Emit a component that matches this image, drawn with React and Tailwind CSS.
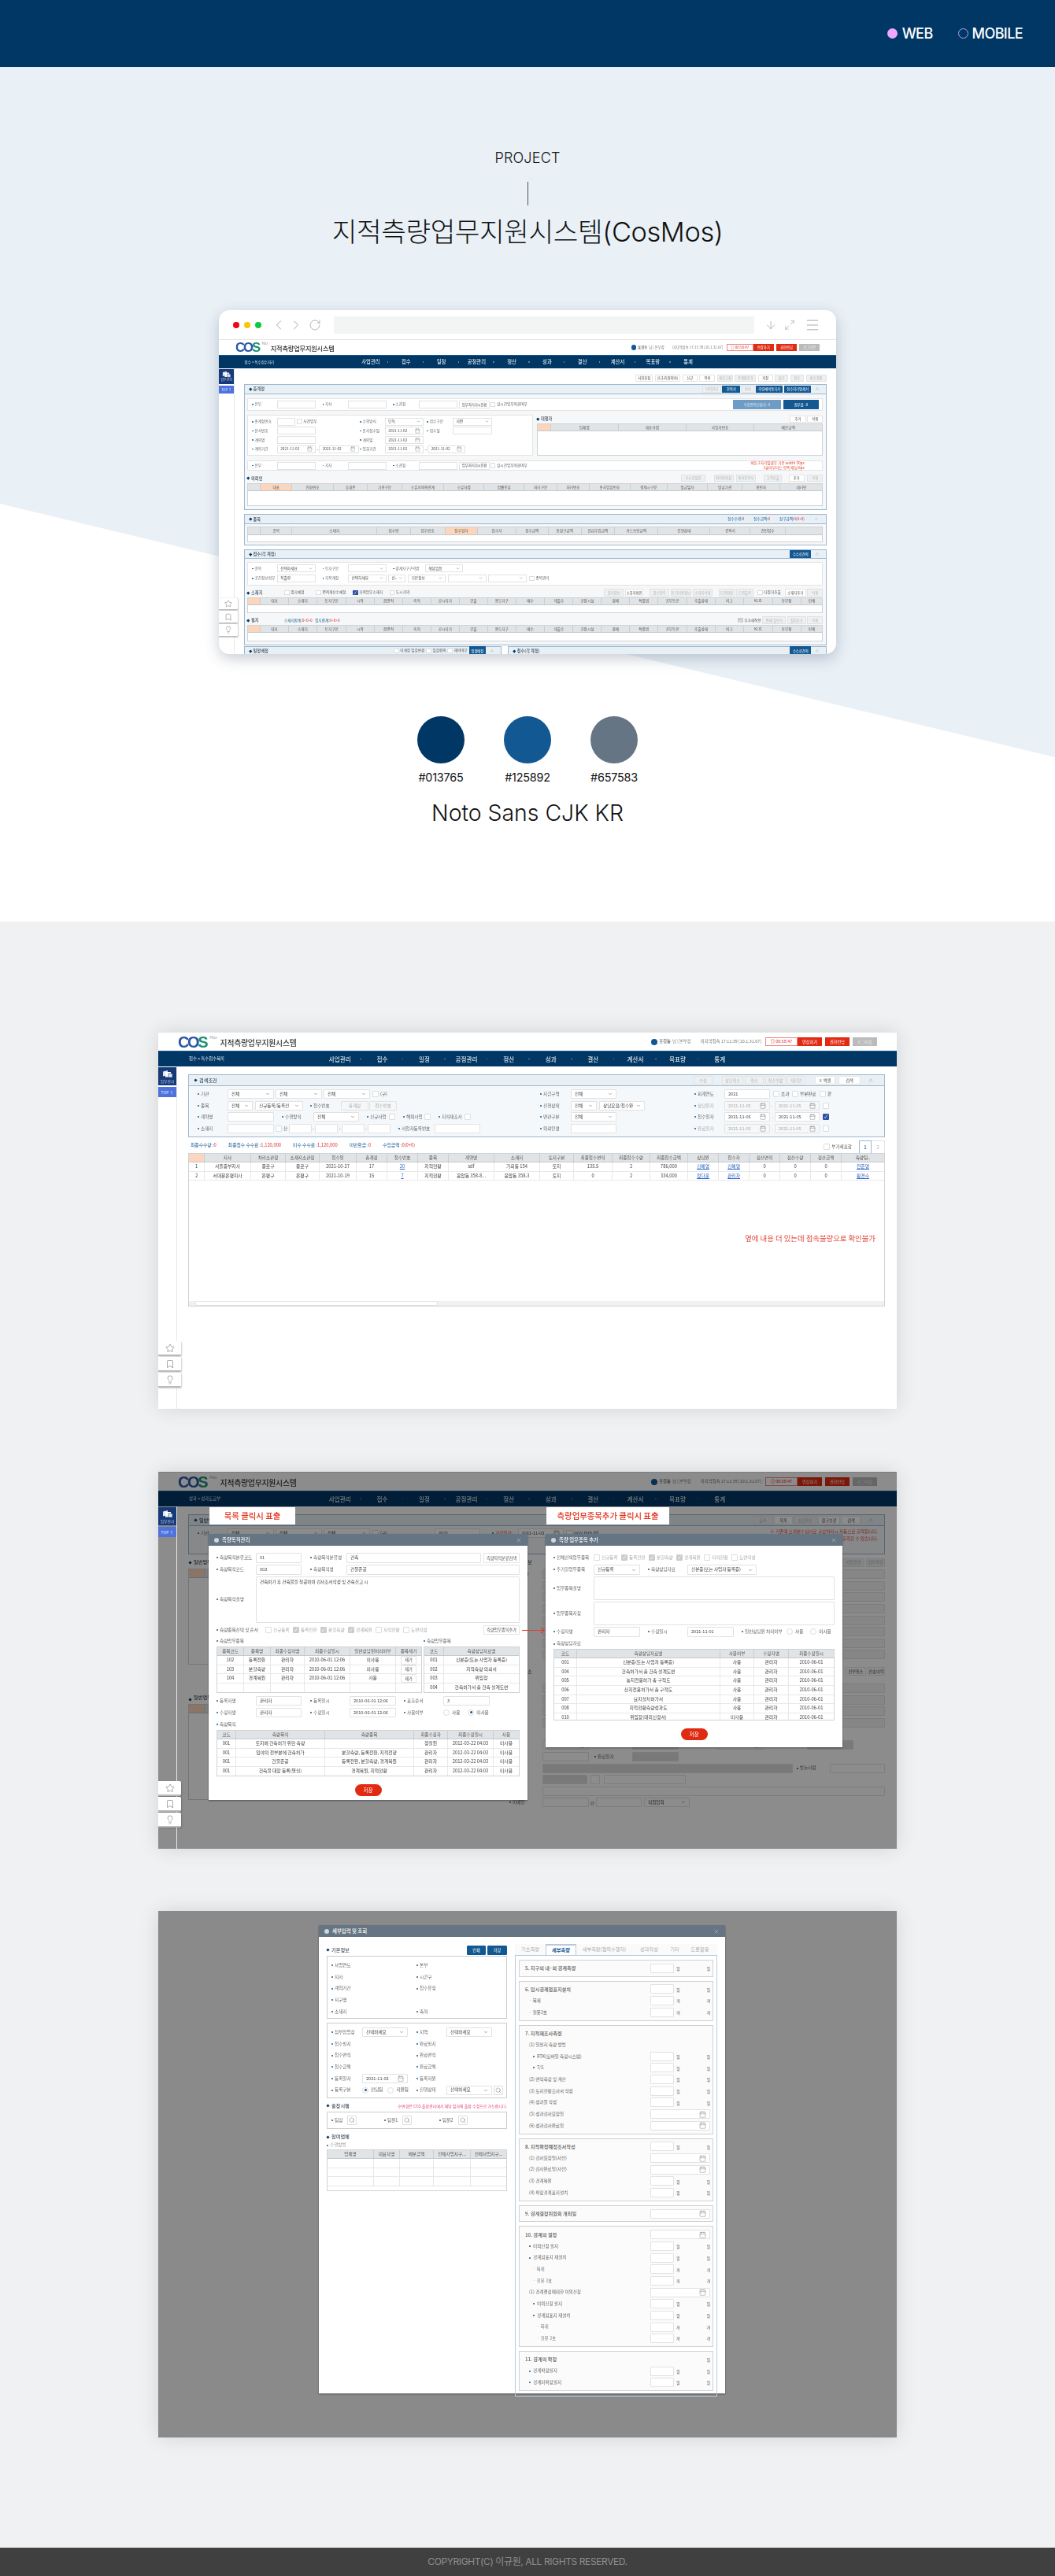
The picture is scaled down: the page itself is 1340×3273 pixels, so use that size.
import React from "react";
import clsx from "clsx";
import {
  ArrowDown,
  Bookmark,
  Calendar,
  ChevronDown,
  ChevronLeft,
  ChevronRight,
  Lightbulb,
  Maximize2,
  Menu,
  RotateCw,
  Search,
  Star,
  X,
} from "lucide-react";

/* ---------- small form bits used by every screen ---------- */

const Lb = ({ children, className, off }) => (
  <span
    className={clsx(
      "flex items-center text-[5.6px] whitespace-nowrap shrink-0",
      off ? "text-[#aaa]" : "text-[#666]",
      className
    )}
  >
    <span className="w-[2px] h-[2px] rounded-full bg-[#125892] mr-[2px] shrink-0"></span>
    {children}
  </span>
);

const Inp = ({ children, className, off }) => (
  <div
    className={clsx(
      "h-[12px] border border-[#e2e2e2] rounded-[1px] px-[4px] flex items-center justify-between text-[5.6px] whitespace-nowrap shrink-0 overflow-hidden",
      off ? "bg-[#f6f7f8] text-[#aaa]" : "bg-white text-[#444]",
      className
    )}
  >
    {children}
  </div>
);

const Sel = ({ children, className, off }) => (
  <Inp className={className} off={off}>
    <span>{children}</span>
    <ChevronDown size={6} strokeWidth={2} className="text-[#555] shrink-0" />
  </Inp>
);

const Dt = ({ children, className, off }) => (
  <Inp className={className} off={off}>
    <span>{children}</span>
    <Calendar size={8} strokeWidth={1.2} className="text-[#666] shrink-0" />
  </Inp>
);

const Chk = ({ children, on, blue, off, className }) => (
  <span className={clsx("flex items-center gap-[2px] text-[5.6px] whitespace-nowrap shrink-0", off ? "text-[#aaa]" : "text-[#555]", className)}>
    <span
      className={clsx(
        "w-[8px] h-[8px] border rounded-[1px] flex items-center justify-center text-[6px] leading-none",
        blue ? "bg-[#2f4fa0] border-[#2f4fa0] text-white" : on ? "bg-[#ccc] border-[#ccc] text-white" : "bg-white border-[#ddd]"
      )}
    >
      {blue || on ? "✓" : ""}
    </span>
    {children}
  </span>
);

const Radio = ({ children, on }) => (
  <span className="flex items-center gap-[3px] text-[5.6px] text-[#555] whitespace-nowrap shrink-0">
    <span className="w-[8px] h-[8px] rounded-full border border-[#ddd] bg-white flex items-center justify-center">
      {on && <span className="w-[3px] h-[3px] rounded-full bg-[#125892]"></span>}
    </span>
    {children}
  </span>
);

const Btn = ({ children, className, kind = "white" }) => (
  <span
    className={clsx(
      "h-[11px] px-[2px] flex items-center justify-center text-[5.2px] whitespace-nowrap shrink-0 border rounded-[1px]",
      kind === "white" && "bg-white border-[#e4e4e4] text-[#444]",
      kind === "off" && "bg-[#eef0f1] border-[#dfe2e4] text-[#b5b5b5]",
      kind === "blue" && "bg-[#125892] border-[#125892] text-white",
      kind === "soft" && "bg-[#6f9cc4] border-[#6f9cc4] text-[#dce8f2]",
      kind === "red" && "bg-[#e02a12] border-[#e02a12] text-white",
      className
    )}
  >
    {children}
  </span>
);

const Diamond = () => <span className="w-[3px] h-[3px] rotate-45 bg-[#013765] mr-[3px] shrink-0"></span>;

const Head = ({ children, className }) => (
  <div className={clsx("flex items-center text-[6.2px] font-medium text-[#3d4b58] whitespace-nowrap shrink-0", className)}>
    <Diamond />
    {children}
  </div>
);

const Panel = ({ title, right, className, children }) => (
  <div className={clsx("border border-[#9db8d0] flex flex-col", className)}>
    <div className="h-[14px] bg-[#e8f0f6] border-b border-[#9db8d0] flex items-center justify-between pl-[7px] pr-[6px] shrink-0">
      <Head>{title}</Head>
      <div className="flex items-center gap-[2px]">{right}</div>
    </div>
    {children}
  </div>
);

const Grid = ({ cols, head, rows = [], hl, hlFirst, className, center = true }) => (
  <div className={clsx("border border-[#cfd3d6] bg-white overflow-hidden", className)}>
    <div className={clsx("grid h-[11px] bg-[#e1e4e6] border-b border-[#c4c9cd]", cols)}>
      {head.map((h, i) => (
        <div
          key={i}
          className={clsx(
            "flex items-center justify-center border-r border-[#c9ced2] text-[5.6px] text-[#555] whitespace-nowrap overflow-hidden last:border-r-0",
            (i === hl || (hlFirst && i === 0)) && "bg-[#fbd5bc]"
          )}
        >
          {h}
        </div>
      ))}
    </div>
    {rows.map((r, i) => (
      <div key={i} className={clsx("grid h-[11.7px] border-b border-[#e8e8e8]", cols)}>
        {r.map((c, j) => (
          <div
            key={j}
            className={clsx(
              "flex items-center border-r border-[#e8e8e8] px-[1px] text-[5.8px] text-[#444] whitespace-nowrap overflow-hidden last:border-r-0",
              center ? "justify-center" : "justify-start"
            )}
          >
            {c}
          </div>
        ))}
      </div>
    ))}
  </div>
);

/* ---------- shared shell of the application ---------- */

const Logo = () => (
  <div className="flex items-start leading-none">
    <span className="font-['Liberation_Sans',sans-serif] font-bold text-[20px] tracking-[-2.4px] leading-[18px] text-[#2a56a8]">
      CO<span className="text-[#1d9170]">S</span>
    </span>
    <span className="ml-[4px] text-[5px] text-[#999] leading-none">Mos</span>
    <span className="ml-[4px] mt-[4px] text-[9.8px] font-medium text-[#333] tracking-[-0.2px] leading-[12px]">지적측량업무지원시스템</span>
  </div>
);

const AppHeader = () => (
  <div className="h-[24px] bg-white border-t border-[#e4e4e4] flex items-center justify-between pl-[25px] pr-[25px] shrink-0">
    <Logo />
    <div className="flex items-center text-[5.4px] text-[#777]">
      <span className="w-[8px] h-[8px] rounded-full bg-[#125892] mr-[2px]"></span>
      <span className="text-[#333]">홍길동</span>
      <span className="ml-[2px]">님 | 본부장</span>
      <span className="ml-[12px]">이지막접속 17:11:39 [10.1.31.67]</span>
      <span className="ml-[5px] h-[11px] w-[41px] border border-[#e88] text-[#d33] flex items-center justify-center bg-white">◎ 00:58:47</span>
      <Btn kind="red" className="w-[31px] rounded-none">연장하기</Btn>
      <Btn kind="red" className="w-[31px] ml-[4px] rounded-none">권한반납</Btn>
      <Btn className="w-[31px] ml-[4px] rounded-none !bg-[#bbb] !border-[#bbb] !text-[#eee]">로그아웃</Btn>
    </div>
  </div>
);

const NAV = ["사업관리", "접수", "일정", "공정관리", "정산", "성과", "결산", "계산서", "목표량", "통계"];

const AppNav = ({ crumb }) => (
  <div className="h-[20px] bg-[#013765] border-t border-[#125892] flex items-center shrink-0 text-white">
    <div className="w-[204px] pl-[39px] text-[5.4px] text-[#dfe8f0] whitespace-nowrap">{crumb}</div>
    <div className="flex">
      {NAV.map((n, i) => (
        <div key={n} className="w-[53.6px] relative flex items-center justify-center text-[7.6px] whitespace-nowrap">
          {n}
          {i < NAV.length - 1 && <span className="absolute right-0 w-[1.5px] h-[1.5px] rounded-full bg-[#6f9cc4]"></span>}
        </div>
      ))}
    </div>
  </div>
);

const QuickBtn = ({ icon: Icon }) => (
  <div className="w-[29px] h-[19px] bg-white border-b-2 border-[#bbb] rounded-r-[2px] shadow-[1px_1px_2px_rgba(0,0,0,0.2)] flex items-center justify-center">
    <Icon size={12} strokeWidth={1} className="text-[#555]" />
  </div>
);

const Sidebar = () => (
  <div className="w-[24px] border-r border-[#e8e8e8] flex flex-col justify-between pt-[1px] pb-[27px] shrink-0 relative z-10">
    <div className="flex flex-col gap-[2px]">
      <div className="h-[23px] bg-[#163a78] flex flex-col items-center justify-center text-white">
        <svg width="14" height="11" viewBox="0 0 14 11">
          <path d="M1 2.5 7 1v6L1 8.5Z" fill="#dfe6f0" />
          <path d="M4 3h7v6.5H4Z" fill="#fff" />
          <path d="M8 5h5v5H8Z" fill="#dfe6f0" stroke="#163a78" strokeWidth="0.6" />
        </svg>
        <span className="text-[4.8px] text-[#b9c9f0] leading-[7px] whitespace-nowrap">업무관리</span>
      </div>
      <div className="h-[13px] bg-[#4f72dd] text-[#e6ecff] text-[5px] flex items-center justify-center">TOP ↑</div>
    </div>
    <div className="flex flex-col gap-[1px]">
      <QuickBtn icon={Star} />
      <QuickBtn icon={Bookmark} />
      <QuickBtn icon={Lightbulb} />
    </div>
  </div>
);

const Shell = ({ crumb, children, overlay, className }) => (
  <div className={clsx("w-[938px] h-[479px] bg-white overflow-hidden relative flex flex-col font-['Noto_Sans_CJK_KR',sans-serif] blur-[0.3px]", className)}>
    <AppHeader />
    <AppNav crumb={crumb} />
    <div className="flex flex-1 min-h-0">
      <Sidebar />
      <div className="flex-1 min-w-0 ml-[14px] mr-[15px]">{children}</div>
    </div>
    {overlay}
  </div>
);

/* ---------- the main form shown inside the browser mock ---------- */

const AddrRow = () => (
  <>
    <Lb className="w-[38px]">본부</Lb>
    <Inp className="w-[59px]" />
    <Lb className="w-[39px] ml-[10px]">지사</Lb>
    <Inp className="w-[59px]" />
    <Lb className="w-[40px] ml-[9px]">소관청</Lb>
    <Inp className="w-[58px]" />
    <Btn className="w-[46px] h-[12px] ml-[3px]">업무처리지시전환</Btn>
    <Chk className="ml-[1px]">실시간업무여권여부</Chk>
  </>
);

const SITE_HEAD = ["", "대표", "소재지", "토지구분", "시작", "읍면적", "축척", "공시지가", "건물", "용도지구", "매수", "제출수", "공장시설", "경매", "특별법", "공부등본", "추출상태", "비고", "KLIS", "동부합", "인쇄"];
const SITE_COLS = "grid-cols-[19.5px_42px_44px_44px_43px_43px_43px_43px_43px_43px_44px_43px_43px_43px_43px_44px_43px_43px_44px_43px_1fr]";

const ReceiptForm = () => (
  <div className="relative">
    <div className="flex justify-end gap-[3px] mt-[10px] h-[11px]">
      <Btn className="w-[26px]">사전요청</Btn>
      <Btn className="w-[39px]">신규(측량의뢰)</Btn>
      <Btn className="w-[23px]">신규</Btn>
      <Btn className="w-[24px]">목록</Btn>
      <Btn kind="off" className="w-[24px]">새로고침</Btn>
      <Btn kind="off" className="w-[32px]">주계정추가</Btn>
      <Btn className="w-[23px]">저장</Btn>
      <Btn kind="off" className="w-[20px]">청구</Btn>
      <Btn kind="off" className="w-[21px]">접수</Btn>
      <Btn kind="off" className="w-[31px]">환수결합</Btn>
    </div>

    <Panel
      title="총계정"
      className="mt-[3px] h-[192px] bg-[#f6f7f8]"
      right={
        <>
          <Btn kind="off" className="w-[28px]">이력관리</Btn>
          <Btn kind="blue" className="w-[27px]">견적서</Btn>
          <Btn kind="off" className="w-[20px]">반려</Btn>
          <Btn kind="blue" className="w-[41px]">측량예비통지서</Btn>
          <Btn kind="blue" className="w-[41px]">접수처리명세서</Btn>
          <span className="w-[14px] text-center text-[6px] text-[#aaa]">∧</span>
        </>
      }
    >
      <div className="mx-[4px] mt-[6px] h-[20px] bg-white border border-[#e4e4e4] flex items-center pl-[6px] pr-[5px] shrink-0">
        <AddrRow />
        <Btn kind="soft" className="w-[74px] h-[14px] ml-auto">측량면적신청서 : 0</Btn>
        <Btn kind="blue" className="w-[54px] h-[14px] ml-[3px]">첨부물 : 0</Btn>
      </div>

      <div className="flex mx-[4px] mt-[6px] gap-[6px] h-[62px] shrink-0">
        <div className="w-[434px] bg-white border border-[#e4e4e4] px-[6px] py-[2px] flex flex-col">
          <div className="flex items-center h-[14.4px]">
            <Lb className="w-[38px]">총계정번호</Lb>
            <Inp className="w-[28px]" />
            <Chk className="ml-[2px] w-[96px]">사전업무</Chk>
            <Lb className="w-[38px]">수행방식</Lb>
            <Sel className="w-[59px]">단독</Sel>
            <Lb className="w-[39px] ml-[5px]">접수구분</Lb>
            <Sel className="w-[60px]">서면</Sel>
          </div>
          <div className="flex items-center h-[14.4px]">
            <Lb className="w-[38px]">문서번호</Lb>
            <Inp className="w-[59px]" />
            <span className="w-[67px]"></span>
            <Lb className="w-[38px]">문서접수일</Lb>
            <Dt className="w-[59px]">2021-11-02</Dt>
            <Lb className="w-[39px] ml-[5px]">접수일</Lb>
            <Inp className="w-[60px]" />
          </div>
          <div className="flex items-center h-[14.4px]">
            <Lb className="w-[38px]">계약명</Lb>
            <Inp className="w-[59px]" />
            <span className="w-[67px]"></span>
            <Lb className="w-[38px]">계약일</Lb>
            <Dt className="w-[59px]">2021-11-02</Dt>
          </div>
          <div className="flex items-center h-[14.4px]">
            <Lb className="w-[38px]">계약기간</Lb>
            <Dt className="w-[59px]">2021-11-02</Dt>
            <span className="w-[5px] text-center text-[5px]">~</span>
            <Dt className="w-[60px]">2021-11-02</Dt>
            <Lb className="w-[38px] ml-[2px]">입회기간</Lb>
            <Dt className="w-[59px]">2021-11-02</Dt>
            <span className="w-[6px] text-center text-[5px]">~</span>
            <Dt className="w-[57px]">2021-11-02</Dt>
          </div>
        </div>
        <div className="flex-1 flex flex-col">
          <div className="flex items-center justify-between h-[12px]">
            <Head>대행자</Head>
            <div className="flex gap-[2px]">
              <Btn className="w-[24px]">추가</Btn>
              <Btn className="w-[24px]">삭제</Btn>
            </div>
          </div>
          <Grid
            hlFirst
            cols="grid-cols-[20px_1fr_1fr_1fr_1fr]"
            head={["", "업체명", "대표자명", "사업자번호", "배분금액"]}
            className="mt-[1px] flex-1"
          />
        </div>
      </div>

      <div className="mx-[4px] mt-[7px] h-[16px] bg-white border border-[#e4e4e4] flex items-center pl-[6px] pr-[27px] shrink-0">
        <AddrRow />
        <div className="ml-auto text-right text-[5.6px] leading-[7px] text-[#e23b2c] whitespace-nowrap">
          <p>버튼 2자리일경우 기본 width 50px</p>
          <p>3글자부터는 양쪽 패딩 8px</p>
        </div>
      </div>

      <div className="flex items-center justify-between mx-[4px] mt-[4px] h-[14px] shrink-0">
        <Head>의뢰인</Head>
        <div className="flex gap-[4px]">
          <Btn kind="off" className="w-[38px]">수수료없음</Btn>
          <span className="w-[4px]"></span>
          <Btn kind="off" className="w-[30px]">의뢰인변경</Btn>
          <Btn kind="off" className="w-[30px]">의뢰인복사</Btn>
          <span className="w-[4px]"></span>
          <Btn kind="off" className="w-[28px]">고객추출</Btn>
          <span className="w-[2px]"></span>
          <Btn className="w-[24px]">추가</Btn>
          <Btn kind="off" className="w-[24px]">삭제</Btn>
        </div>
      </div>
      <Grid
        hl={1}
        cols="grid-cols-[19.5px_47.6px_63px_52px_52px_64px_61px_61px_50px_49px_62px_56px_62px_52px_58px_1fr]"
        head={["", "대표", "전화번호", "휴대폰", "기관구분", "소유자와의관계", "소유자명", "법률종류", "처리구분", "처리번호", "총사업담번호", "결제시구분", "발급일자", "발급기관", "확인자", "대리인"]}
        className="mx-[4px] mt-[1px] h-[35px] shrink-0"
      />
    </Panel>

    <Panel
      title="종목"
      className="mt-[6px] h-[48px] bg-[#f6f7f8]"
      right={
        <div className="flex items-center gap-[14px] pr-[4px] text-[5.6px] text-[#125892] whitespace-nowrap">
          <span>접수수량:<b className="text-[#d33] font-normal">0</b></span>
          <span>접수금액:<b className="text-[#d33] font-normal">0</b></span>
          <span>청구금액:<b className="text-[#d33] font-normal">0(0+0)</b></span>
          <span className="w-[8px] text-center text-[#aaa]">∧</span>
        </div>
      }
    >
      <Grid
        hl={5}
        cols="grid-cols-[19.5px_47.6px_129px_51px_52.5px_50px_58px_49px_50px_51px_66px_79px_61px_53px_1fr]"
        head={["", "종목", "소재지", "접수량", "접수번호", "접수업자", "접수자", "접수금액", "총청구금액", "현금수입금액", "카드승인금액", "진행상태", "견적서", "견인접수", ""]}
        className="mx-[4px] mt-[4px] h-[23px] shrink-0"
      />
    </Panel>

    <Panel
      title="접수(각 계정)"
      className="mt-[5px] h-[146px] bg-[#f6f7f8]"
      right={
        <>
          <Btn kind="blue" className="w-[32px] h-[13px]">수수료견적</Btn>
          <span className="w-[14px] text-center text-[6px] text-[#aaa]">∧</span>
        </>
      }
    >
      <div className="mx-[4px] mt-[4px] h-[36px] bg-white border border-[#e4e4e4] px-[6px] flex flex-col justify-center shrink-0">
        <div className="flex items-center h-[15px]">
          <Lb className="w-[38px]">종목</Lb>
          <Sel className="w-[59px]">선택하세요</Sel>
          <Lb className="w-[39px] ml-[10px]">토지구분</Lb>
          <Sel className="w-[59px]" />
          <Lb className="w-[49px] ml-[9px]">경계지구구역명</Lb>
          <Sel className="w-[58px]">해당없음</Sel>
        </div>
        <div className="flex items-center h-[15px]">
          <Lb className="w-[38px]">공간정보법무</Lb>
          <Inp className="w-[59px]">직출량</Inp>
          <Lb className="w-[39px] ml-[10px]">지목계정</Lb>
          <Sel className="w-[59px]">선택하세요</Sel>
          <Sel className="w-[26px] ml-[2px]">선..</Sel>
          <Sel className="w-[57px] ml-[4px]">기본정보</Sel>
          <Sel className="w-[58px] ml-[4px]" />
          <Sel className="w-[58px] ml-[3px]" />
          <Chk className="ml-[4px]">중복관리</Chk>
        </div>
      </div>
      <div className="flex items-center mx-[4px] mt-[4px] h-[14px] shrink-0">
        <Head className="w-[56px]">소재지</Head>
        <Chk className="w-[48px]">필지예정</Chk>
        <Chk className="w-[56px]">면적계산수예정</Chk>
        <Chk blue className="w-[56px]">지적업무소재지</Chk>
        <Chk>도시지역</Chk>
        <div className="flex gap-[2px] ml-auto">
          <Btn kind="off" className="w-[30px]">필지정보</Btn>
          <Btn className="w-[28px]">소유자확인</Btn>
          <span className="w-[5px]"></span>
          <Btn kind="off" className="w-[30px]">필수입력</Btn>
          <Btn kind="off" className="w-[32px]">토지이용정보</Btn>
          <Btn kind="off" className="w-[30px]">소재지삭제</Btn>
          <span className="w-[5px]"></span>
          <Btn kind="off" className="w-[25px]">도면열람</Btn>
          <Btn kind="off" className="w-[26px]">도면출력</Btn>
          <Chk className="mx-[4px]">다필지추출</Chk>
          <Btn className="w-[32px]">소재지추가</Btn>
          <Btn kind="off" className="w-[24px]">삭제</Btn>
        </div>
      </div>
      <Grid hl={0} cols={SITE_COLS} head={SITE_HEAD} className="mx-[4px] h-[24px] shrink-0" />
      <div className="flex items-center mx-[4px] mt-[4px] h-[14px] shrink-0">
        <Head className="w-[56px]">필지</Head>
        <span className="text-[5.6px] text-[#125892] whitespace-nowrap">소재지합계:<b className="text-[#d33] font-normal">0+0+0</b></span>
        <span className="ml-[4px] text-[5.6px] text-[#125892] whitespace-nowrap">필지합계:<b className="text-[#d33] font-normal">0+0+0</b></span>
        <div className="flex gap-[2px] ml-auto items-center">
          <Chk on>부가세적용</Chk>
          <Btn kind="off" className="w-[36px]">면세/할인서</Btn>
          <Btn kind="off" className="w-[28px]">필지추가</Btn>
          <Btn kind="off" className="w-[24px]">삭제</Btn>
        </div>
      </div>
      <Grid hl={0} cols={SITE_COLS} head={SITE_HEAD} className="mx-[4px] h-[25px] shrink-0" />
    </Panel>

    <div className="flex gap-[10px] mt-[1px]">
      <Panel
        title="일정배정"
        className="w-[391px] bg-[#f6f7f8]"
        right={
          <>
            <Chk>이계정 일괄변경</Chk>
            <Chk>일괄합의</Chk>
            <Chk>해약여부</Chk>
            <Btn kind="blue" className="w-[26px] h-[13px]">일정배정</Btn>
            <span className="w-[14px] text-center text-[6px] text-[#aaa]">∧</span>
          </>
        }
      />
      <Panel
        title="접수(각 계정)"
        className="flex-1 bg-[#f6f7f8]"
        right={
          <>
            <Btn kind="blue" className="w-[32px] h-[13px]">수수료견적</Btn>
            <span className="w-[14px] text-center text-[6px] text-[#aaa]">∧</span>
          </>
        }
      />
    </div>
  </div>
);

/* ---------- screen 1: the receipt list ---------- */

const LIST_COLS = "grid-cols-[20px_59px_44px_43px_47px_39px_39px_39px_58px_58px_43px_49px_48px_48px_39px_39px_39px_39px_39px_1fr]";
const Link = ({ children }) => <span className="text-[#2d66c4] underline">{children}</span>;

const ReceiptList = () => (
  <div>
    <Panel
      title="검색조건"
      className="mt-[10px] h-[80px] bg-[#f5f8fb]"
      right={
        <>
          <Btn kind="off" className="w-[24px]">수정</Btn>
          <span className="w-[8px]"></span>
          <Btn kind="off" className="w-[27px]">상담취소</Btn>
          <Btn kind="off" className="w-[24px]">취소</Btn>
          <Btn kind="off" className="w-[26px]">취소부활</Btn>
          <Btn kind="off" className="w-[23px]">재기안</Btn>
          <span className="w-[8px]"></span>
          <Btn className="w-[26px]"><span className="text-[#2a8a4a] mr-[2px]">X</span>엑셀</Btn>
          <Btn className="w-[28px] ml-[2px]">검색</Btn>
          <span className="w-[22px] text-center text-[6px] text-[#aaa]">∧</span>
        </>
      }
    >
      <div className="flex pl-[11px] pt-[3px]">
        <div className="w-[435px]">
          <div className="flex items-center h-[14.6px]">
            <Lb className="w-[38px]">기관</Lb>
            <Sel className="w-[59px]">전체</Sel>
            <Sel className="w-[59px] ml-[2px]">전체</Sel>
            <Sel className="w-[59px] ml-[2px]">전체</Sel>
            <Chk className="ml-[3px]">(구)</Chk>
          </div>
          <div className="flex items-center h-[14.6px]">
            <Lb className="w-[38px]">종목</Lb>
            <Sel className="w-[32px]">전체</Sel>
            <Sel className="w-[61px] ml-[3px]">신규등록/등록전</Sel>
            <Lb className="w-[39px] ml-[9px]">접수번호</Lb>
            <Inp off className="w-[35px] justify-center">총계정</Inp>
            <Inp off className="w-[35px] ml-[1px] justify-center">접수번호</Inp>
          </div>
          <div className="flex items-center h-[14.6px]">
            <Lb className="w-[38px]">계약명</Lb>
            <Inp className="w-[59px]" />
            <Lb className="w-[40px] ml-[10px]">수행방식</Lb>
            <Sel className="w-[58px]">전체</Sel>
            <Lb className="w-[28px] ml-[10px]">신규사업</Lb>
            <Chk />
            <Lb className="w-[27px] ml-[10px]">해외사업</Lb>
            <Chk />
            <Lb className="w-[33px] ml-[10px]">지적재조사</Lb>
            <Chk />
          </div>
          <div className="flex items-center h-[14.6px]">
            <Lb className="w-[38px]">소재지</Lb>
            <Inp className="w-[59px]" />
            <Chk className="ml-[2px]">산</Chk>
            <Inp className="w-[29px] ml-[2px]" />
            <span className="w-[4px] text-center text-[5px]">-</span>
            <Inp className="w-[29px]" />
            <span className="w-[5px] text-center text-[5px]">-</span>
            <Inp className="w-[29px]" />
            <span className="w-[4px] text-center text-[5px]">-</span>
            <Inp className="w-[29px]" />
            <Lb className="w-[46px] ml-[10px]">사업자등록번호</Lb>
            <Inp className="w-[58px]" />
          </div>
        </div>
        <div className="w-[196px]">
          <div className="flex items-center h-[14.6px]">
            <Lb className="w-[39px]">지급구역</Lb>
            <Sel className="w-[58px]">전체</Sel>
          </div>
          <div className="flex items-center h-[14.6px]">
            <Lb className="w-[39px]">진행상태</Lb>
            <Sel className="w-[33px]">전체</Sel>
            <Sel className="w-[58px] ml-[3px]">상담요청/접수완</Sel>
          </div>
          <div className="flex items-center h-[14.6px]">
            <Lb className="w-[39px]">면관구분</Lb>
            <Sel className="w-[58px]">전체</Sel>
          </div>
          <div className="flex items-center h-[14.6px]">
            <Lb className="w-[39px]">의뢰인명</Lb>
            <Inp className="w-[58px]" />
          </div>
        </div>
        <div>
          <div className="flex items-center h-[14.6px]">
            <Lb className="w-[38px]">회계연도</Lb>
            <Inp className="w-[58px]">2021</Inp>
            <Chk className="ml-[4px] w-[24px]">초과</Chk>
            <Chk className="w-[35px]">부분완료</Chk>
            <Chk>끝</Chk>
          </div>
          {[
            ["상담일자", true, false],
            ["접수일자", false, true],
            ["완료일자", true, false],
          ].map(([l, off, blue]) => (
            <div key={l} className="flex items-center h-[14.6px]">
              <Lb off={off} className="w-[38px]">{l}</Lb>
              <Dt off={off} className="w-[58px]">2021-11-05</Dt>
              <span className="w-[6px] text-center text-[5px] text-[#888]">-</span>
              <Dt off={off} className="w-[57px]">2021-11-05</Dt>
              <Chk blue={blue} className="ml-[4px]" />
            </div>
          ))}
        </div>
      </div>
    </Panel>

    <div className="flex items-end justify-between h-[20px]">
      <div className="flex gap-[15px] pl-[3px] pb-[5px] text-[5.8px] text-[#125892] whitespace-nowrap">
        <span>최종수수량 :<b className="text-[#d33] font-normal">0</b></span>
        <span>최종접수 수수료 :<b className="text-[#d33] font-normal">1,120,000</b></span>
        <span>미수 수수료 :<b className="text-[#d33] font-normal">1,120,000</b></span>
        <span>미반환금 :<b className="text-[#d33] font-normal">0</b></span>
        <span>수입금액 :<b className="text-[#d33] font-normal">0(0+0)</b></span>
      </div>
      <div className="flex items-end">
        <Chk className="mb-[4px] mr-[9px]">부가세포함</Chk>
        <span className="w-[16px] h-[16px] border border-b-0 border-[#9db8d0] bg-white flex items-center justify-center text-[7px] text-[#125892]">1</span>
        <span className="w-[17px] h-[16px] border border-b-0 border-l-0 border-[#e4e4e4] bg-white flex items-center justify-center text-[7px] text-[#bbb]">2</span>
      </div>
    </div>

    <div className="relative border border-[#cfd3d6] h-[195px] flex flex-col">
      <Grid
        hlFirst
        cols={LIST_COLS}
        head={["", "지사", "처리소관청", "소재지소관청", "접수일", "총계정", "접수번호", "종목", "계약명", "소재지", "토지구분", "최종접수면적", "최종접수수량", "최종접수금액", "상담원", "접수자", "정산면적", "정산수량", "정산금액", "측량팀.."]}
        rows={[
          ["1", "서울중부지사", "종로구", "종로구", "2021-10-27", "17", <Link>20</Link>, "지적현황", "sdf", "가회동 154", "토지", "135.5", "2", "786,000", <Link>김혜영</Link>, <Link>김혜영</Link>, "0", "0", "0", <Link>전준영</Link>],
          ["2", "서대문은평지사", "은평구", "은평구", "2021-10-19", "15", <Link>7</Link>, "지적현황", "응암동 358-8...", "응암동 358-3", "토지", "0", "2", "334,000", <Link>정다운</Link>, <Link>관리자</Link>, "0", "0", "0", <Link>황경수</Link>],
        ]}
        className="border-0"
      />
      <p className="absolute right-[11px] top-[100px] text-[9.4px] text-[#e2483a] whitespace-nowrap">옆에 내용 더 있는데 접속불량으로 확인불가</p>
      <div className="mt-auto h-[6px] bg-[#f1f1f1] pl-[8px]">
        <div className="w-[308px] h-full bg-white border border-[#e4e4e4] rounded-[2px]"></div>
      </div>
    </div>
  </div>
);

/* ---------- screen 2: two dialogs over a dimmed form ---------- */

const Modal = ({ title, className, children }) => (
  <div className={clsx("bg-white flex flex-col shadow-[0_1px_2px_rgba(0,0,0,0.4)]", className)}>
    <div className="h-[15px] bg-[#657583] flex items-center pl-[7px] pr-[7px] shrink-0 text-white">
      <span className="w-[6px] h-[6px] rounded-full bg-[#cfd6dc] mr-[4px] shrink-0"></span>
      <span className="text-[6.4px] font-medium">{title}</span>
      <X size={8} strokeWidth={1.2} className="ml-auto text-[#dfe4e8]" />
    </div>
    {children}
  </div>
);

const SaveBtn = ({ className }) => (
  <div className={clsx("w-[34px] h-[15px] rounded-full bg-[#e02a12] text-white text-[6.4px] flex items-center justify-center", className)}>저장</div>
);

const Callout = ({ children, className }) => (
  <div className={clsx("absolute top-[45px] h-[22px] bg-white flex items-center justify-center text-[10.4px] font-medium text-[#e2331e] whitespace-nowrap z-20", className)}>
    {children}
  </div>
);

const PURPOSE_ROWS = [
  ["001", "토지에 건축허가 위한 측량", "", "정철원", "2012-03-22 04:03", "미사용"],
  ["001", "임야의 전부분에 건축허가", "분할측량, 등록전환, 지적전향", "관리자", "2012-03-22 04:03", "미사용"],
  ["001", "건물준공", "등록전환, 분할측량, 경계복원", "관리자", "2012-03-22 04:03", "미사용"],
  ["001", "건축물 대장 등록(멸실)", "경계복원, 지적현황", "관리자", "2012-03-22 04:03", "미사용"],
];

const PurposeModal = () => (
  <Modal title="측량목적관리" className="absolute left-[64px] top-[79px] w-[405px] h-[338px] z-10">
    <div className="px-[10px] pt-[9px] flex flex-col">
      <div className="flex items-center h-[13px]">
        <Lb className="w-[50px]">측량목적분류코드</Lb>
        <Inp className="w-[58px] h-[13px]">01</Inp>
        <Lb className="w-[46px] ml-[11px]">측량목적분류명</Lb>
        <Inp className="w-[171px] h-[13px]">건축</Inp>
        <Btn className="flex-1 ml-[3px] h-[13px]">측량목적분류검색</Btn>
      </div>
      <div className="flex items-center h-[13px] mt-[2px]">
        <Lb className="w-[50px]">측량목적코드</Lb>
        <Inp className="w-[58px] h-[13px]">003</Inp>
        <Lb className="w-[46px] ml-[11px]">측량목적명</Lb>
        <Inp className="flex-1 h-[13px]">건물준공</Inp>
      </div>
      <div className="flex items-center h-[59px] mt-[2px]">
        <Lb className="w-[50px]">측량목적설명</Lb>
        <Inp className="flex-1 h-[59px] !items-start pt-[2px]">건축허가 후 건축물을 착공하여 검사조서작성 및 건축신고 시</Inp>
      </div>
      <div className="flex items-center h-[12px] mt-[3px]">
        <Lb className="w-[62px]">측량종목선택 및 순서</Lb>
        <Chk off className="w-[35px]">신규등록</Chk>
        <Chk off on className="w-[35px]">등록전환</Chk>
        <Chk off on className="w-[35px]">분할측량</Chk>
        <Chk off on className="w-[35px]">경계복원</Chk>
        <Chk off className="w-[35px]">지적현황</Chk>
        <Chk off>도면작성</Chk>
        <Btn className="ml-auto w-[46px] h-[12px]">측량업무종목추가</Btn>
      </div>
      <div className="flex items-center h-[14px] mt-[1px]">
        <Lb className="w-[263px]">측량업무종목</Lb>
        <Lb>측량업무종목</Lb>
      </div>
      <div className="flex gap-[2px]">
        <Grid
          cols="grid-cols-[34px_34px_43px_58px_58px_1fr]"
          head={["종목코드", "종목명", "최종수정자명", "최종수정일시", "일반상담원처리여부", "종목제거"]}
          rows={[
            ["102", "등록전환", "관리자", "2010-06-01 12:06", "미사용", <Btn className="w-[20px] h-[8px]">제거</Btn>],
            ["103", "분할측량", "관리자", "2010-06-01 12:06", "미사용", <Btn className="w-[20px] h-[8px]">제거</Btn>],
            ["104", "경계복원", "관리자", "2010-06-01 12:06", "사용", <Btn className="w-[20px] h-[8px]">제거</Btn>],
            ["", "", "", "", "", ""],
          ]}
          className="w-[261px] h-[59px]"
        />
        <Grid
          cols="grid-cols-[25px_1fr]"
          head={["코드", "측량상담자료명"]}
          rows={[
            ["001", "신분증(또는 사업자 등록증)"],
            ["002", "지적측량 의뢰서"],
            ["003", "위임장"],
            ["004", "건축허가서 총 건축 설계도면"],
          ]}
          className="flex-1 h-[59px]"
        />
      </div>
      <div className="flex items-center h-[12px] mt-[4px]">
        <Lb className="w-[50px]">등록자명</Lb>
        <Inp className="w-[58px]">관리자</Inp>
        <Lb className="w-[50px] ml-[11px]">등록일시</Lb>
        <Inp className="w-[59px]">2010-06-01 12:06</Inp>
        <Lb className="w-[50px] ml-[10px]">표출순서</Lb>
        <Inp className="w-[59px]">3</Inp>
      </div>
      <div className="flex items-center h-[12px] mt-[3px]">
        <Lb className="w-[50px]">수정자명</Lb>
        <Inp className="w-[58px]">관리자</Inp>
        <Lb className="w-[50px] ml-[11px]">수정일시</Lb>
        <Inp className="w-[59px]">2010-06-01 12:06</Inp>
        <Lb className="w-[50px] ml-[10px]">사용여부</Lb>
        <Radio>사용</Radio>
        <span className="w-[10px]"></span>
        <Radio on>미사용</Radio>
      </div>
      <Lb className="h-[14px] mt-[2px]">측량목적</Lb>
      <Grid
        cols="grid-cols-[24px_113px_113px_43px_58px_1fr]"
        head={["코드", "측량목적", "측량종목", "최종수정자", "최종수정일시", "사용"]}
        rows={PURPOSE_ROWS}
        className="h-[59px]"
      />
      <SaveBtn className="self-center mt-[10px]" />
    </div>
  </Modal>
);

const ITEM_ROWS = [
  ["001", "신분증(또는 사업자 등록증)"],
  ["004", "건축허가서 총 건축 설계도면"],
  ["005", "농지전용허가 총 구적도"],
  ["006", "산지전용허가서 총 구적도"],
  ["007", "묘지설치허가서"],
  ["008", "지적현황측량성과도"],
  ["010", "위임장(대리신청서)"],
].map(([c, n], i) => [c, n, i === 6 ? "미사용" : "사용", "관리자", "2010-06-01"]);

const ItemModal = () => (
  <Modal title="측량 업무종목 추가" className="absolute left-[492px] top-[79px] w-[377px] h-[271px] z-10">
    <div className="px-[10px] pt-[9px] flex flex-col">
      <div className="flex items-center h-[13px]">
        <Lb className="w-[51px]">전체선택업무종목</Lb>
        <Chk off className="w-[35px]">신규등록</Chk>
        <Chk off on className="w-[35px]">등록전환</Chk>
        <Chk off on className="w-[35px]">분할측량</Chk>
        <Chk off on className="w-[35px]">경계복원</Chk>
        <Chk off className="w-[35px]">지적현황</Chk>
        <Chk off>도면작성</Chk>
      </div>
      <div className="flex items-center h-[13px] mt-[2px]">
        <Lb className="w-[51px]">추가할업무종목</Lb>
        <Sel className="w-[59px] h-[13px]">신규등록</Sel>
        <Lb className="w-[50px] ml-[10px]">측량상담자료</Lb>
        <Sel className="w-[88px] h-[13px]">신분증(또는 사업자 등록증)</Sel>
      </div>
      <div className="flex items-center h-[30px] mt-[2px]">
        <Lb className="w-[51px]">업무종목설명</Lb>
        <Inp className="flex-1 h-[30px]" />
      </div>
      <div className="flex items-center h-[30px] mt-[2px]">
        <Lb className="w-[51px]">업무종목지침</Lb>
        <Inp className="flex-1 h-[30px]" />
      </div>
      <div className="flex items-center h-[13px] mt-[2px]">
        <Lb className="w-[51px]">수정자명</Lb>
        <Inp className="w-[59px] h-[13px]">관리자</Inp>
        <Lb className="w-[50px] ml-[10px]">수정일시</Lb>
        <Inp className="w-[59px] h-[13px]">2021-11-01</Inp>
        <Lb className="w-[57px] ml-[10px]">일반상담원 처리여부</Lb>
        <Radio>사용</Radio>
        <span className="w-[9px]"></span>
        <Radio>미사용</Radio>
      </div>
      <Lb className="h-[13px] mt-[2px]">측량상담자료</Lb>
      <Grid
        cols="grid-cols-[29px_182px_43px_44px_1fr]"
        head={["코드", "측량상담자료명", "사용여부", "수정자명", "최종수정일시"]}
        rows={ITEM_ROWS}
        className="h-[91px]"
      />
      <SaveBtn className="self-center mt-[10px]" />
    </div>
  </Modal>
);

const DimBackdrop = () => (
  <div>
    <Panel
      title="일반업무"
      className="mt-[10px] h-[51px] bg-[#f5f8fb]"
      right={
        <>
          <Btn kind="off" className="w-[24px]">등록</Btn>
          <Btn className="w-[24px]">목록</Btn>
          <Btn kind="off" className="w-[28px]">상담취소</Btn>
          <Btn className="w-[28px]">청구보류</Btn>
          <Btn className="w-[24px]">검색</Btn>
          <span className="w-[22px] text-center text-[6px] text-[#aaa]">∧</span>
        </>
      }
    >
      <div className="flex items-start justify-between pl-[11px] pr-[8px] pt-[3px]">
        <div className="flex items-center">
          <Lb className="w-[38px]">기관</Lb>
          <Sel className="w-[59px]">전체</Sel>
          <Sel className="w-[59px] ml-[2px]">전체</Sel>
          <Sel className="w-[59px] ml-[2px]">전체</Sel>
          <Chk className="ml-[3px]">(구)</Chk>
          <Inp className="w-[58px] ml-[60px]">2021</Inp>
          <Lb className="ml-[15px] !text-[#e2483a]">기정일자</Lb>
          <Dt className="w-[58px] ml-[8px]">2021-11-02</Dt>
          <Chk className="ml-[3px]">yyyy.mm.dd</Chk>
        </div>
        <div className="text-right text-[5.6px] leading-[9px] text-[#e2483a] whitespace-nowrap">
          <p>※ 기존에 오래분수심사로 규보처리시 자동으로 출력됩니다.</p>
          <p>출력할 수 있습니다.</p>
        </div>
      </div>
    </Panel>
    <div className="flex mt-[2px]">
      <div className="w-[401px] shrink-0">
        <Head className="h-[16px] ml-[1px]">일반업무 목록</Head>
        <Grid hlFirst cols="grid-cols-[20px_1fr_1fr_1fr_1fr]" head={["", "지사", "종목", "접수번호", "상태"]} className="h-[122px]" />
        <Head className="h-[50px] ml-[1px] items-end pb-[4px]">일반업무 상세</Head>
        <Grid hlFirst cols="grid-cols-[20px_1fr_1fr_1fr_1fr]" head={["", "지사", "종목", "접수번호", "상태"]} className="h-[122px]" />
      </div>
      <div className="flex-1 pl-[7px] flex flex-col">
        <div className="flex items-center justify-between h-[16px]">
          <Head>기본정보</Head>
          <div className="flex gap-[2px]">
            <Btn kind="off" className="w-[28px]">사업변경</Btn>
            <Btn kind="off" className="w-[24px]">첨부파일</Btn>
          </div>
        </div>
        {["수행일자", "명", "주소", "호", "수행지", "호", "이사장", "정"].map((l, i) => (
          <div key={i} className="flex items-center h-[14.6px]">
            <Lb className="w-[42px]">{l}</Lb>
            <Inp className="flex-1 !bg-[#f4f4f4]" />
          </div>
        ))}
        <div className="flex items-center justify-between h-[28px]">
          <Head>의뢰취소</Head>
          <div className="flex gap-[2px]">
            <Btn className="w-[26px]">전부취소</Btn>
            <Btn className="w-[22px]">전송이력</Btn>
          </div>
        </div>
        {["본", "면", "소재지", "면"].map((l, i) => (
          <div key={i} className="flex items-center h-[14.6px]">
            <Lb className="w-[42px]">{l}</Lb>
            <Inp className="flex-1 !bg-[#f4f4f4]" />
          </div>
        ))}
        <div className="flex items-center h-[14.6px] mt-[14px]">
          <Lb className="w-[42px]">일자</Lb>
          <Dt className="w-[59px]" />
          <Lb className="w-[48px] ml-[7px]">수령일자</Lb>
          <Inp className="w-[59px] !bg-[#ddd]" />
          <Lb className="w-[41px] ml-[8px]">교부일자</Lb>
          <Dt className="w-[59px]" />
          <Lb className="w-[48px] ml-[7px]">수령일자</Lb>
          <Inp className="w-[59px] !bg-[#ddd]" />
        </div>
        <div className="flex items-center h-[14.6px]">
          <Lb className="w-[42px]">성명</Lb>
          <Inp className="w-[59px]" />
          <Lb className="w-[48px] ml-[7px]">완료일자</Lb>
          <Inp className="w-[59px] !bg-[#ddd]" />
        </div>
        <div className="flex items-center h-[14.6px]">
          <Lb className="w-[42px]">주소</Lb>
          <Inp className="w-[318px] !bg-[#ddd]" />
          <Lb className="w-[42px] ml-[5px]">받는사람</Lb>
          <Inp className="flex-1" />
        </div>
        <div className="flex items-center h-[14.6px]">
          <Lb className="w-[42px]">수령지</Lb>
          <Inp className="w-[57px] !bg-[#ddd]" />
          <Inp className="w-[12px] ml-[4px]" />
          <Inp className="w-[104px] ml-[5px]" />
        </div>
        <div className="flex items-center h-[14.6px]">
          <span className="w-[42px]"></span>
          <Inp className="flex-1" />
        </div>
        <div className="flex items-center h-[14.6px]">
          <Lb className="w-[42px]">이메일</Lb>
          <Inp className="w-[59px]" />
          <span className="w-[9px] text-center text-[6px] text-[#777]">@</span>
          <Inp className="w-[58px]" />
          <Sel className="w-[58px] ml-[3px]">직접입력</Sel>
        </div>
      </div>
    </div>
  </div>
);

const Dimmed = (
  <>
    <div className="absolute inset-0 bg-black/45"></div>
    <Callout className="left-[65px] w-[109px]">목록 클릭시 표출</Callout>
    <Callout className="left-[493px] w-[156px]">측량업무종목추가 클릭시 표출</Callout>
    <PurposeModal />
    <ItemModal />
    <svg className="absolute left-[462px] top-[197px] z-20" width="31" height="9" viewBox="0 0 31 9">
      <path d="M0 4.5H28M24 1l4.5 3.5L24 8" stroke="#d8432f" strokeWidth="1.2" fill="none" />
    </svg>
  </>
);

/* ---------- screen 3: detail input dialog ---------- */

const INDENT = {
  0: "pl-[7px] text-[6.2px] font-medium text-[#555]",
  1: "pl-[12px] text-[5.6px] text-[#666]",
  2: "pl-[12px] text-[5.6px] text-[#666]",
  3: "pl-[17px] text-[5.6px] text-[#666]",
  4: "pl-[17px] text-[5.6px] text-[#888]",
  5: "pl-[22px] text-[5.6px] text-[#888]",
};

const Num = ({ unit }) => (
  <>
    <Inp className="w-[30px] h-[11px]" />
    <span className="ml-[3px] text-[5px] text-[#666]">{unit}</span>
    <span className="ml-auto text-[5px] text-[#666]">{unit}</span>
  </>
);

const DtWide = () => (
  <Inp className="w-[76px] h-[11px]">
    <span></span>
    <Calendar size={9} strokeWidth={1.1} className="text-[#666]" />
  </Inp>
);

const MeasureRow = ({ level = 0, label, unit, date, last }) => (
  <div className="flex items-center h-[14.67px]">
    <div className={clsx("w-[166px] shrink-0 whitespace-nowrap flex items-center", INDENT[level])}>
      {level === 2 || level === 3 ? <span className="w-[2px] h-[2px] rounded-full bg-[#125892] mr-[3px]"></span> : null}
      {label}
    </div>
    <div className="flex-1 flex items-center pr-[3px]">
      {date && <DtWide />}
      {unit && <Num unit={unit} />}
      {last && <span className="ml-auto text-[5px] text-[#666]">{last}</span>}
    </div>
  </div>
);

const MEASURE = [
  { rows: [{ label: "5. 지구의 내·외 경계측량", unit: "필" }] },
  {
    rows: [
      { label: "6. 임시경계점표지설치", unit: "필" },
      { level: 1, label: "· 목재", unit: "개" },
      { level: 1, label: "· 철못3호", unit: "개" },
    ],
  },
  {
    rows: [
      { label: "7. 지적재조사측량" },
      { level: 1, label: "(1) 일필지 측량 방법" },
      { level: 3, label: "RTK(모바일 측정시스템)", unit: "필" },
      { level: 3, label: "T/S", unit: "필" },
      { level: 1, label: "(2) 면적측정 및 계산", unit: "필" },
      { level: 1, label: "(3) 토지현황조사서 작성", unit: "필" },
      { level: 1, label: "(4) 성과물 작성", unit: "필" },
      { level: 1, label: "(5) 성과검사요청일", date: true },
      { level: 1, label: "(6) 성과검사완료일", date: true },
    ],
  },
  {
    rows: [
      { label: "8. 지적확정예정조서작성", unit: "필" },
      { level: 1, label: "(1) 검사요청일(사전)", date: true },
      { level: 1, label: "(2) 검사완료일(사전)", date: true },
      { level: 1, label: "(3) 경계복원", unit: "필" },
      { level: 1, label: "(4) 확정경계표지설치", unit: "필" },
    ],
  },
  { rows: [{ label: "9. 경계결정위원회 개최일", date: true }] },
  {
    rows: [
      { label: "10. 경계의 결정", date: true },
      { level: 2, label: "이의신청 필지", unit: "필" },
      { level: 2, label: "경계점표지 재설치", unit: "필" },
      { level: 4, label: "· 목재", unit: "개" },
      { level: 4, label: "· 철못 3호", unit: "개" },
      { level: 1, label: "(1) 경계결정에대한 이의신청", date: true },
      { level: 3, label: "이의신청 필지", unit: "필" },
      { level: 3, label: "경계점표지 재설치", unit: "필" },
      { level: 5, label: "· 목재", unit: "개" },
      { level: 5, label: "· 철못 3호", unit: "개" },
    ],
  },
  {
    rows: [
      { label: "11. 경계의 확정", last: "필" },
      { level: 2, label: "경계확정필지", unit: "필" },
      { level: 2, label: "경계미확정필지", unit: "필" },
    ],
  },
];

const TABS = [
  ["기초측량", "w-[39px]"],
  ["세부측량", "w-[39px]"],
  ["세부측량(협력수행자)", "w-[71px]"],
  ["성과작성", "w-[43px]"],
  ["기타", "w-[22px]"],
  ["드론활용", "w-[42px]"],
];

const Search2 = () => (
  <span className="w-[12px] h-[12px] border border-[#ddd] rounded-[1px] bg-white flex items-center justify-center shrink-0">
    <Search size={8} strokeWidth={1.2} className="text-[#555]" />
  </span>
);

const DetailModal = () => (
  <Modal title="세부입력 및 조회" className="w-[516px] h-[595px] ml-[204px]">
    <div className="flex pl-[10px] pr-[10px] pt-[9px]">
      <div className="w-[229px] shrink-0 flex flex-col">
        <div className="flex items-center justify-between h-[15px]">
          <Head>기본정보</Head>
          <div className="flex gap-[2px]">
            <Btn kind="blue" className="w-[24px] h-[12px]">인쇄</Btn>
            <Btn kind="blue" className="w-[25px] h-[12px]">저장</Btn>
          </div>
        </div>
        <div className="h-[80px] border border-[#ccc] bg-white grid grid-cols-[108px_1fr] auto-rows-[14.67px] pl-[5px] pt-[4px]">
          <Lb>사업연도</Lb><Lb>본부</Lb>
          <Lb>지사</Lb><Lb>시군구</Lb>
          <Lb>계약기간</Lb><Lb>접수유형</Lb>
          <Lb>지구명</Lb><span></span>
          <Lb>소재지</Lb><Lb>축척</Lb>
        </div>
        <div className="h-[96px] mt-[5px] border border-[#ccc] bg-white grid grid-cols-[108px_1fr] auto-rows-[14.67px] pl-[5px] pt-[4px]">
          <div className="flex items-center">
            <Lb className="w-[39px]">첨부협업장</Lb>
            <Sel className="w-[58px]">선택하세요</Sel>
          </div>
          <div className="flex items-center">
            <Lb className="w-[38px]">지역</Lb>
            <Sel className="w-[58px]">선택하세요</Sel>
          </div>
          <Lb>접수필지</Lb><Lb>완료필지</Lb>
          <Lb>접수면적</Lb><Lb>완료면적</Lb>
          <Lb>접수금액</Lb><Lb>완료금액</Lb>
          <div className="flex items-center">
            <Lb className="w-[39px]">등록일자</Lb>
            <Dt className="w-[58px]">2021-11-02</Dt>
          </div>
          <Lb>등록자원</Lb>
          <div className="flex items-center">
            <Lb className="w-[39px]">등록구분</Lb>
            <Radio on>전담팀</Radio>
            <span className="w-[6px]"></span>
            <Radio>지원팀</Radio>
          </div>
          <div className="flex items-center">
            <Lb className="w-[38px]">진행상태</Lb>
            <Sel className="w-[58px]">선택하세요</Sel>
            <span className="ml-[2px]"><Search2 /></span>
          </div>
        </div>
        <div className="flex items-center justify-between h-[15px] mt-[2px]">
          <Head>출장시행</Head>
          <span className="text-[5px] text-[#e2406a] whitespace-nowrap">※변경은 COS 출장관리에서 해당 일자의 출장 수정으로 가능합니다.</span>
        </div>
        <div className="h-[22px] border border-[#ccc] bg-white flex items-center pl-[5px]">
          <Lb className="w-[20px]">팀장</Lb>
          <Search2 />
          <Lb className="w-[23px] ml-[35px]">팀원1</Lb>
          <Search2 />
          <Lb className="w-[24px] ml-[35px]">팀원2</Lb>
          <Search2 />
        </div>
        <Head className="h-[14px] mt-[3px]">참여업체</Head>
        <Lb className="h-[7px] text-[#999]">수행방법</Lb>
        <Grid
          cols="grid-cols-[59px_33px_43px_47px_1fr]"
          head={["업체명", "대표자명", "배분금액", "전체사업지구...", "전체사업지구..."]}
          rows={[["", "", "", "", ""], ["", "", "", "", ""], ["", "", "", "", ""]]}
          className="mt-[2px] h-[53px]"
        />
      </div>

      <div className="w-[257px] ml-[10px] shrink-0 flex flex-col">
        <div className="h-[15px] flex border-b border-[#b5cbdd] text-[6.2px] text-[#b0b0b0] bg-[#fafafa]">
          {TABS.map(([t, w], i) => (
            <div
              key={t}
              className={clsx(
                "flex items-center justify-center whitespace-nowrap",
                w,
                i === 1 && "bg-white border border-b-0 border-t-2 border-[#b5cbdd] font-bold text-[#125892]"
              )}
            >
              {t}
            </div>
          ))}
        </div>
        <div className="border border-t-0 border-[#b5cbdd] px-[4px] pt-[5px] pb-[6px] flex flex-col gap-[5px]">
          {MEASURE.map((box, i) => (
            <div key={i} className="border border-[#d0d0d0] bg-[#fbfbfb] py-[2.5px]">
              {box.rows.map((r, j) => (
                <MeasureRow key={j} {...r} />
              ))}
            </div>
          ))}
        </div>
      </div>
    </div>
  </Modal>
);

/* ---------- page ---------- */

const BrowserMock = () => (
  <div className="w-[784px] h-[437px] bg-white rounded-[14px] overflow-hidden shadow-[0_6px_18px_rgba(60,80,100,0.28)] mt-[77px] flex flex-col shrink-0">
    <div className="h-[37px] flex items-center shrink-0 pl-[18px]">
      <span className="w-[8px] h-[8px] rounded-full bg-[#f4050f]"></span>
      <span className="w-[8px] h-[8px] rounded-full bg-[#fbc50a] ml-[6px]"></span>
      <span className="w-[8px] h-[8px] rounded-full bg-[#10c83c] ml-[6px]"></span>
      <ChevronLeft size={20} strokeWidth={1.1} className="text-[#999] ml-[12px]" />
      <ChevronRight size={20} strokeWidth={1.1} className="text-[#999] ml-[2px]" />
      <RotateCw size={16} strokeWidth={1.1} className="text-[#999] ml-[6px]" />
      <div className="w-[534px] h-[22px] bg-[#f3f4f4] ml-[16px]"></div>
      <ArrowDown size={16} strokeWidth={1} className="text-[#999] ml-[13px]" />
      <Maximize2 size={14} strokeWidth={1} className="text-[#999] ml-[9px]" />
      <Menu size={20} strokeWidth={1} className="text-[#999] ml-[12px]" />
    </div>
    <div className="[zoom:0.836]">
      <Shell crumb="접수 > 특수접수처리">
        <ReceiptForm />
      </Shell>
    </div>
  </div>
);

const SWATCHES = [
  ["#013765", "bg-[#013765]"],
  ["#125892", "bg-[#125892]"],
  ["#657583", "bg-[#657583]"],
];

export default function App() {
  return (
    <div className="w-[1340px] font-['Inter','Noto_Sans_CJK_KR',sans-serif] text-[#111]">
      <header className="h-[85px] bg-[#013765] flex items-center justify-end pr-[41px] text-white text-[18px] font-medium tracking-[-0.6px]">
        <span className="w-[13px] h-[13px] rounded-full bg-[#eea8ff] mr-[6px]"></span>
        <span>WEB</span>
        <span className="w-[13px] h-[13px] rounded-full border border-[#b9a0f0] ml-[32px] mr-[5px]"></span>
        <span>MOBILE</span>
      </header>

      <section className="relative h-[1086px] bg-[#e9f0f6] overflow-hidden">
        <div className="absolute inset-0 bg-white [clip-path:polygon(0_555px,100%_877px,100%_100%,0_100%)]"></div>
        <div className="relative flex flex-col items-center pt-[103px]">
          <p className="text-[18px] leading-[26px] font-light tracking-[0.2px]">PROJECT</p>
          <div className="w-px h-[30px] bg-[#555] mt-[17px]"></div>
          <h1 className="text-[34.4px] leading-[44px] font-light mt-[12px] tracking-[-0.4px]">지적측량업무지원시스템(CosMos)</h1>
          <BrowserMock />
          <div className="flex gap-[50px] mt-[79px]">
            {SWATCHES.map(([hex, bg]) => (
              <div key={hex} className="w-[60px] flex flex-col items-center">
                <div className={clsx("w-[60px] h-[60px] rounded-full", bg)}></div>
                <span className="mt-[8px] text-[14.4px] leading-[20px] tracking-[-0.2px]">{hex}</span>
              </div>
            ))}
          </div>
          <p className="mt-[17px] text-[28.4px] leading-[36px] font-light">Noto Sans CJK KR</p>
        </div>
      </section>

      <section className="h-[2066px] bg-[#f0f1f3] flex flex-col items-center pt-[140px]">
        <div className="shadow-[0_0_24px_rgba(0,0,0,0.12)] shrink-0">
          <Shell crumb="접수 > 특수접수목록">
            <ReceiptList />
          </Shell>
        </div>
        <div className="shadow-[0_0_24px_rgba(0,0,0,0.12)] mt-[80px] shrink-0">
          <Shell crumb="성과 > 성과도교부" overlay={Dimmed}>
            <DimBackdrop />
          </Shell>
        </div>
        <div className="w-[938px] h-[669px] bg-[#8a8a8a] mt-[79px] pt-[18px] shrink-0 shadow-[0_0_24px_rgba(0,0,0,0.12)] font-['Noto_Sans_CJK_KR',sans-serif] overflow-hidden">
          <div className="blur-[0.3px]">
            <DetailModal />
          </div>
        </div>
      </section>

      <footer className="h-[36px] bg-[#404040] flex items-center justify-center text-[12px] text-[#8f8f8f] tracking-[-0.4px]">
        COPYRIGHT(C) 이규원, ALL RIGHTS RESERVED.
      </footer>
    </div>
  );
}
